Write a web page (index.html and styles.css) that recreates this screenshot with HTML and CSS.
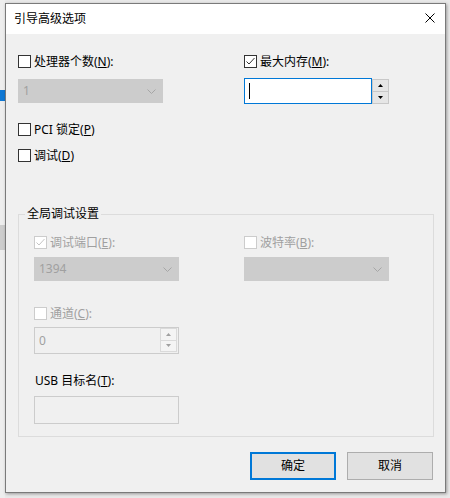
FILE: index.html
```html
<!DOCTYPE html>
<html lang="zh-CN">
<head>
<meta charset="utf-8">
<title>引导高级选项</title>
<link rel="stylesheet" href="styles.css">
</head>
<body>
<div class="dialog">
  <div class="titlebar">
    <span class="title">引导高级选项</span>
    <svg class="close" width="10" height="10" viewBox="0 0 10 10"><path d="M0.5 0.5 L9.5 9.5 M9.5 0.5 L0.5 9.5" stroke="#000" stroke-width="1" fill="none"/></svg>
  </div>
  <div class="content">
    <div class="top">
      <div class="col">
        <label class="check"><span class="box"></span><span class="lbl">处理器个数(<u>N</u>):</span></label>
        <div class="combo disabled c-top"><span class="val">1</span><svg class="chev" width="9" height="5" viewBox="0 0 9 5"><polyline points="0.5,0.5 4.5,4.5 8.5,0.5" fill="none" stroke="#a6a6a6"/></svg></div>
        <label class="check c-pci"><span class="box"></span><span class="lbl">PCI 锁定(<u>P</u>)</span></label>
        <label class="check c-dbg"><span class="box"></span><span class="lbl">调试(<u>D</u>)</span></label>
      </div>
      <div class="col">
        <label class="check"><span class="box"><svg width="11" height="11" viewBox="0 0 11 11"><polyline points="1.5,5.5 4,8 9.5,2" fill="none" stroke="#333" stroke-width="1"/></svg></span><span class="lbl">最大内存(<u>M</u>):</span></label>
        <div class="spinfield mem">
          <div class="edit focus"><span class="caret"></span></div>
          <div class="spin">
            <span class="sbtn"><svg width="5" height="3" viewBox="0 0 5 3"><polygon points="2.5,0 5,3 0,3" fill="#000"/></svg></span>
            <span class="sbtn"><svg width="5" height="3" viewBox="0 0 5 3"><polygon points="0,0 5,0 2.5,3" fill="#000"/></svg></span>
          </div>
        </div>
      </div>
    </div>

    <div class="group">
      <span class="group-title">全局调试设置</span>
      <div class="gcols">
        <div class="col">
          <label class="check disabled"><span class="box"><svg width="11" height="11" viewBox="0 0 11 11"><polyline points="1.5,5.5 4,8 9.5,2" fill="none" stroke="#c4c4c4" stroke-width="1"/></svg></span><span class="lbl">调试端口(<u>E</u>):</span></label>
          <div class="combo disabled c-g"><span class="val">1394</span><svg class="chev" width="9" height="5" viewBox="0 0 9 5"><polyline points="0.5,0.5 4.5,4.5 8.5,0.5" fill="none" stroke="#a6a6a6"/></svg></div>
          <label class="check disabled c-chan"><span class="box"></span><span class="lbl">通道(<u>C</u>):</span></label>
          <div class="spinfield dis chan">
            <div class="edit"><span class="val">0</span></div>
            <div class="spin">
              <span class="sbtn"><svg width="5" height="3" viewBox="0 0 5 3"><polygon points="2.5,0 5,3 0,3" fill="#a0a0a0"/></svg></span>
              <span class="sbtn"><svg width="5" height="3" viewBox="0 0 5 3"><polygon points="0,0 5,0 2.5,3" fill="#a0a0a0"/></svg></span>
            </div>
          </div>
          <div class="usb-label">USB 目标名(<u>T</u>):</div>
          <div class="textbox dis"></div>
        </div>
        <div class="col">
          <label class="check disabled"><span class="box"></span><span class="lbl">波特率(<u>B</u>):</span></label>
          <div class="combo disabled c-g"><span class="val"></span><svg class="chev" width="9" height="5" viewBox="0 0 9 5"><polyline points="0.5,0.5 4.5,4.5 8.5,0.5" fill="none" stroke="#a6a6a6"/></svg></div>
        </div>
      </div>
    </div>

    <div class="buttons">
      <button class="btn default">确定</button>
      <button class="btn">取消</button>
    </div>
  </div>
</div>
</body>
</html>
```

FILE: styles.css
```css
html, body {
  margin: 0;
  padding: 0;
}
body {
  background-color: #e9e9e9;
  background-image: linear-gradient(#eeeeee 0, #eeeeee 90px, #0f78d4 90px, #0f78d4 101px, #eeeeee 101px, #eeeeee 225px, #cdcdcd 225px, #cdcdcd 250px, #eeeeee 250px);
  background-size: 5px 498px;
  background-repeat: no-repeat;
  font-family: "Noto Sans", "Noto Sans CJK SC", sans-serif;
  font-size: 12px;
  line-height: 16px;
  color: #000;
  height: 498px;
  overflow: hidden;
}
.dialog {
  margin: 3px 0 0 5px;
  width: 441px;
  height: 490px;
  box-sizing: border-box;
  border: 1px solid #7a7a7a;
  background: #f0f0f0;
  box-shadow: 1px 1px 3px rgba(0,0,0,0.35);
}
.titlebar {
  height: 30px;
  background: #fff;
  display: flex;
  align-items: center;
  padding-left: 8px;
}
.title {
  font-size: 12px;
  line-height: 16px;
}
.close {
  margin-left: auto;
  margin-right: 10px;
  margin-top: -2px;
  display: block;
}
.content {
  padding: 21px 0 0 12px;
}
.top {
  display: grid;
  grid-template-columns: 226px 145px;
}
.col {
  display: flex;
  flex-direction: column;
  align-items: flex-start;
}
.check {
  display: flex;
  align-items: center;
  height: 13px;
  white-space: nowrap;
}
.box {
  width: 13px;
  height: 13px;
  box-sizing: border-box;
  border: 1px solid #333;
  background: #fff;
  display: block;
  flex: none;
}
.box svg {
  display: block;
}
.lbl {
  margin-left: 3px;
  line-height: 16px;
}
.check.disabled .box {
  border-color: #cccccc;
}
.check.disabled .lbl {
  color: #a0a0a0;
}
.combo {
  width: 145px;
  height: 24px;
  box-sizing: border-box;
  display: flex;
  align-items: center;
  padding: 0 6px 0 4px;
}
.combo.disabled {
  background: #cccccc;
  border: 1px solid #cccccc;
  color: #a0a0a0;
}
.combo .val {
  flex: 1;
}
.chev {
  display: block;
}
.c-top { margin-top: 11px; }
.c-pci { margin-top: 20px; }
.c-dbg { margin-top: 13px; }

.spinfield {
  display: flex;
  width: 145px;
  box-sizing: border-box;
}
.spinfield.mem {
  margin-top: 10px;
  height: 26px;
}
.edit {
  flex: 1;
  box-sizing: border-box;
  display: flex;
  align-items: center;
  padding-left: 4px;
}
.edit.focus {
  border: 1px solid #0078d7;
  background: #fff;
}
.caret {
  width: 1px;
  height: 16px;
  background: #000;
}
.spin {
  width: 17px;
  display: flex;
  flex-direction: column;
}
.mem .spin {
  padding: 1px 0 0 0;
}
.sbtn {
  flex: 1;
  box-sizing: border-box;
  display: flex;
  align-items: center;
  justify-content: center;
}
.mem .sbtn {
  background: #e6e6e6;
  border: 1px solid #c8c8c8;
}
.mem .sbtn + .sbtn {
  border-top: none;
}
.sbtn svg {
  display: block;
}

.group {
  position: relative;
  margin-top: 52px;
  width: 416px;
  height: 223px;
  box-sizing: border-box;
  border: 1px solid #dcdcdc;
  padding: 21px 0 0 15px;
}
.group-title {
  position: absolute;
  top: -9px;
  left: 6px;
  padding: 0 2px;
  background: #f0f0f0;
  line-height: 16px;
}
.gcols {
  display: grid;
  grid-template-columns: 210px 145px;
}
.c-g { margin-top: 8px; }
.c-chan { margin-top: 26px; }
.spinfield.dis {
  border: 1px solid #cccccc;
  background: #f0f0f0;
}
.spinfield.chan {
  margin-top: 7px;
  height: 27px;
}
.spinfield.dis .edit {
  color: #a0a0a0;
}
.chan .spin {
  padding: 0 1px 1px 0;
}
.chan .sbtn {
  background: #f4f4f4;
  border: 1px solid #dadada;
}
.chan .sbtn + .sbtn {
  border-top: none;
}
.usb-label {
  margin-top: 19px;
  padding-left: 1px;
  line-height: 16px;
}
.textbox {
  margin-top: 7px;
  width: 145px;
  height: 28px;
  box-sizing: border-box;
}
.textbox.dis {
  border: 1px solid #cccccc;
  background: #f0f0f0;
}

.buttons {
  margin-top: 15px;
  width: 415px;
  display: flex;
  justify-content: flex-end;
  gap: 11px;
}
.btn {
  width: 86px;
  height: 28px;
  box-sizing: border-box;
  background: #e1e1e1;
  border: 1px solid #adadad;
  font-family: "Noto Sans", "Noto Sans CJK SC", sans-serif;
  font-size: 12px;
  line-height: 16px;
  color: #000;
  padding: 0;
  margin: 0;
}
.btn.default {
  border: 2px solid #0078d7;
}
```
